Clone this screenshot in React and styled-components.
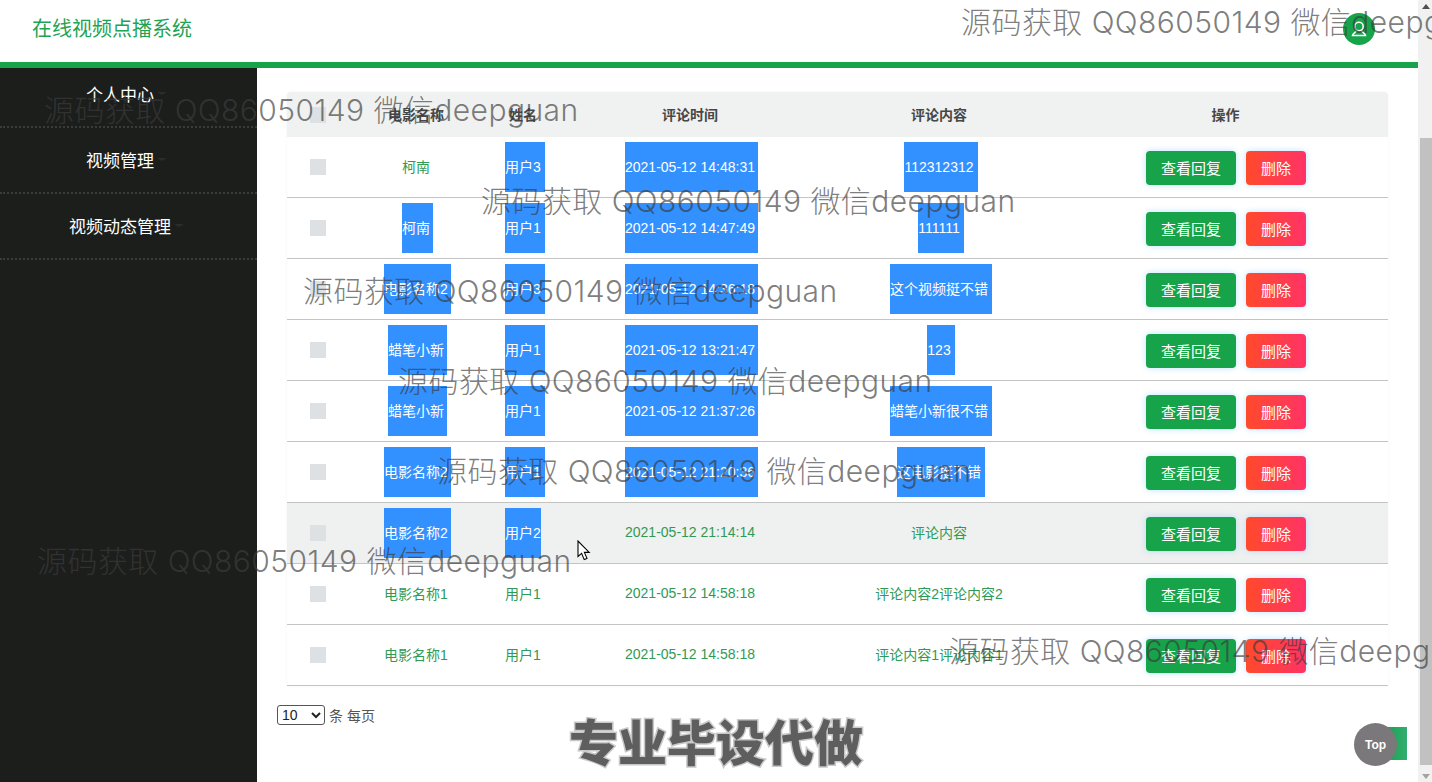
import React from "react";
import styled, { createGlobalStyle } from "styled-components";

const CJK = `"Liberation Sans", "Noto Sans CJK SC", sans-serif`;

const Global = createGlobalStyle`
  html, body { margin: 0; padding: 0; height: 100%; overflow: hidden; background: #fff; }
  body { font-family: ${CJK}; }
  * { box-sizing: border-box; }
`;

const Page = styled.div`
  position: relative;
  display: flex;
  width: 1432px;
  height: 782px;
  overflow: hidden;
  background: #fff;
`;
const Main = styled.div`
  display: flex;
  flex-direction: column;
  width: 1418px;
  height: 782px;
`;
const Header = styled.header`
  flex: none;
  display: flex;
  align-items: center;
  justify-content: space-between;
  height: 68px;
  padding: 0 43px 4px 32px;
  background: #fff;
  border-bottom: 6px solid #16a34a;
`;
const Title = styled.div`
  font-size: 20px;
  line-height: 28px;
  color: #1fa354;
`;
const Avatar = styled.div`
  display: flex;
  align-items: center;
  justify-content: center;
  width: 32px;
  height: 32px;
  border-radius: 50%;
  background: #16a34a;
`;
const Body = styled.div`
  flex: 1;
  display: flex;
  min-height: 0;
`;
const Sidebar = styled.nav`
  flex: none;
  width: 257px;
  background: #1c1e1c;
  overflow: hidden;
`;
const MenuList = styled.div`
  margin-top: -6px;
`;
const MenuItem = styled.div`
  display: flex;
  align-items: center;
  justify-content: center;
  gap: 3px;
  height: 66px;
  padding: 0 18px 2px 0;
  color: #fff;
  font-size: 17px;
  border-bottom: 2px dotted #3a3c3a;
`;
const Caret = styled.span`
  width: 0;
  height: 0;
  margin-right: -14px;
  border-left: 5px solid transparent;
  border-right: 5px solid transparent;
  border-top: 3px solid #2b2d2b;
`;
const Content = styled.main`
  flex: 1;
  min-width: 0;
  padding: 24px 30px 0;
`;
const Table = styled.table`
  width: 1101px;
  table-layout: fixed;
  border-collapse: separate;
  border-spacing: 0;
  font-size: 14px;
  box-shadow: 0 0 2px rgba(0, 0, 0, 0.06);
`;
const Th = styled.th`
  height: 45px;
  padding: 0 0 2px;
  background: #f0f1f1;
  color: #474747;
  font-size: 14px;
  font-weight: 700;
  text-align: center;
  &:first-child { border-top-left-radius: 4px; }
  &:last-child { border-top-right-radius: 4px; padding-left: 2px; }
`;
const Tr = styled.tr`
  background: ${(p) => (p.$hover ? "#eff0f0" : "#fff")};
`;
const Td = styled.td`
  height: 61px;
  padding: 0 0 2px;
  color: #2f9a55;
  text-align: center;
  border-bottom: 1px solid #c4c4c4;
`;
const Check = styled.span`
  display: block;
  width: 16px;
  height: 16px;
  margin: 2px auto 0 23px;
  background: #dde1e4;
`;
const Selected = styled.span`
  display: inline-block;
  vertical-align: middle;
  height: 50px;
  line-height: 50px;
  padding-right: ${(p) => p.$trail}px;
  margin-right: ${(p) => -p.$trail}px;
  margin-top: 2px;
  background: #3390ff;
  color: #fff;
  white-space: nowrap;
`;
const Actions = styled.div`
  display: flex;
  justify-content: center;
  gap: 10px;
  padding: 4px 0 0 3px;
`;
const Button = styled.button`
  width: ${(p) => (p.$danger ? 60 : 90)}px;
  height: 34px;
  padding: 0 0 2px;
  border: 0;
  border-radius: 4px;
  color: #fff;
  font-family: ${CJK};
  font-size: 15px;
  background: ${(p) =>
    p.$danger ? "linear-gradient(90deg, #ff4a2b, #ff3366)" : "#16a34a"};
  box-shadow: 0 0 6px rgba(110, 190, 255, 0.45);
`;
const Pager = styled.div`
  display: flex;
  align-items: center;
  gap: 4px;
  margin: 19px 0 0 -10px;
  color: #555;
  font-size: 14px;
`;
const PageSelect = styled.select`
  width: 48px;
  height: 20px;
  padding: 0;
  background: #fff;
  font-family: ${CJK};
  font-size: 14px;
  color: #222;
  border: 1px solid #555;
  border-radius: 3px;
`;
const Scrollbar = styled.div`
  flex: none;
  display: flex;
  flex-direction: column;
  align-items: flex-end;
  width: 14px;
  height: 782px;
  background: #f1f1f1;
`;
const ScrollArrow = styled.div`
  flex: none;
  display: flex;
  align-items: center;
  justify-content: center;
  width: 12px;
  height: 12px;
`;
const ScrollTrack = styled.div`
  flex: 1;
  width: 12px;
  padding: 126px 0 5px;
`;
const ScrollThumb = styled.div`
  height: 100%;
  background: #c1c1c1;
`;
const Watermark = styled.div`
  position: absolute;
  left: ${(p) => p.$x}px;
  top: ${(p) => p.$y}px;
  font-family: "Inter", "Noto Sans CJK SC", sans-serif;
  font-size: 30px;
  font-weight: 300;
  letter-spacing: 0.44px;
  line-height: 40px;
  white-space: nowrap;
  color: rgba(60, 60, 60, 0.68);
  pointer-events: none;
`;
const Banner = styled.div`
  position: absolute;
  left: 569px;
  top: 705px;
  font-family: "Noto Sans CJK SC", sans-serif;
  font-size: 49px;
  font-weight: 900;
  line-height: 70px;
  white-space: nowrap;
  color: #5e5e5e;
  -webkit-text-stroke: 3px #c9c9c9;
  paint-order: stroke fill;
`;
const TopSquare = styled.div`
  position: absolute;
  left: 1385px;
  top: 727px;
  width: 22px;
  height: 33px;
  background: linear-gradient(90deg, #16a34a, #34ad72);
`;
const TopButton = styled.div`
  position: absolute;
  left: 1354px;
  top: 723px;
  display: flex;
  align-items: center;
  justify-content: center;
  width: 43px;
  height: 43px;
  border-radius: 50%;
  background: #7a787a;
  color: #fff;
  font-size: 12px;
  font-weight: 700;
`;
const Pointer = styled.svg`
  position: absolute;
  left: 577px;
  top: 540px;
`;

const rows = [
  { name: "柯南", user: "用户3", time: "2021-05-12 14:48:31", text: "112312312", sel: "utc" },
  { name: "柯南", user: "用户1", time: "2021-05-12 14:47:49", text: "111111", sel: "nutc" },
  { name: "电影名称2", user: "用户3", time: "2021-05-12 14:36:18", text: "这个视频挺不错", sel: "nutc" },
  { name: "蜡笔小新", user: "用户1", time: "2021-05-12 13:21:47", text: "123", sel: "nutc" },
  { name: "蜡笔小新", user: "用户1", time: "2021-05-12 21:37:26", text: "蜡笔小新很不错", sel: "nutc" },
  { name: "电影名称2", user: "用户1", time: "2021-05-12 21:20:36", text: "这电影挺不错", sel: "nutc" },
  { name: "电影名称2", user: "用户2", time: "2021-05-12 21:14:14", text: "评论内容", sel: "nU", hover: true },
  { name: "电影名称1", user: "用户1", time: "2021-05-12 14:58:18", text: "评论内容2评论内容2", sel: "" },
  { name: "电影名称1", user: "用户1", time: "2021-05-12 14:58:18", text: "评论内容1评论内容1", sel: "" },
];

const marks = [
  [961, 2], [44, 90], [481, 181], [303, 271], [398, 361], [437, 451], [37, 541], [949, 631],
];

const widths = [62, 134, 80, 254, 244, 327];

const Cell = ({ on, trail = 3, children }) => (
  <Td>{on ? <Selected $trail={trail}>{children}</Selected> : children}</Td>
);

export default function App() {
  return (
    <Page>
      <Global />
      <Main>
        <Header>
          <Title>在线视频点播系统</Title>
          <Avatar>
            <svg width="20" height="20" viewBox="0 0 20 20" fill="none" stroke="#fff" strokeWidth="1.5">
              <circle cx="10" cy="7.5" r="4.2" />
              <path d="M7.5 11.5 C7 13.5 4 14 3.5 16.5 H16.5 C16 14 13 13.5 12.5 11.5" />
            </svg>
          </Avatar>
        </Header>
        <Body>
          <Sidebar>
            <MenuList>
              {["个人中心", "视频管理", "视频动态管理"].map((m) => (
                <MenuItem key={m}>
                  {m}
                  <Caret />
                </MenuItem>
              ))}
            </MenuList>
          </Sidebar>
          <Content>
            <Table>
              <colgroup>
                {widths.map((w, i) => (
                  <col key={i} width={w} />
                ))}
              </colgroup>
              <thead>
                <tr>
                  <Th><Check /></Th>
                  <Th>电影名称</Th>
                  <Th>姓名</Th>
                  <Th>评论时间</Th>
                  <Th>评论内容</Th>
                  <Th>操作</Th>
                </tr>
              </thead>
              <tbody>
                {rows.map((r, i) => (
                  <Tr key={i} $hover={r.hover}>
                    <Td><Check /></Td>
                    <Cell on={r.sel.includes("n")}>{r.name}</Cell>
                    <Cell on={/u/i.test(r.sel)} trail={r.sel.includes("U") ? 0 : 4}>{r.user}</Cell>
                    <Cell on={r.sel.includes("t")}>{r.time}</Cell>
                    <Cell on={r.sel.includes("c")} trail={4}>{r.text}</Cell>
                    <Td>
                      <Actions>
                        <Button>查看回复</Button>
                        <Button $danger>删除</Button>
                      </Actions>
                    </Td>
                  </Tr>
                ))}
              </tbody>
            </Table>
            <Pager>
              <PageSelect defaultValue="10">
                <option value="10">10</option>
                <option value="20">20</option>
              </PageSelect>
              <span>条 每页</span>
            </Pager>
          </Content>
        </Body>
      </Main>
      <Scrollbar>
        <ScrollArrow>
          <svg width="8" height="5" viewBox="0 0 8 5"><path d="M4 0 L8 5 H0 Z" fill="#505050" /></svg>
        </ScrollArrow>
        <ScrollTrack>
          <ScrollThumb />
        </ScrollTrack>
        <ScrollArrow>
          <svg width="8" height="5" viewBox="0 0 8 5"><path d="M0 0 H8 L4 5 Z" fill="#a3a3a3" /></svg>
        </ScrollArrow>
      </Scrollbar>
      {marks.map(([x, y]) => (
        <Watermark key={y} $x={x} $y={y}>源码获取 QQ86050149 微信deepguan</Watermark>
      ))}
      <Banner>专业毕设代做</Banner>
      <TopSquare />
      <TopButton>Top</TopButton>
      <Pointer width="14" height="21" viewBox="0 0 14 21">
        <path d="M1 1 V16.5 L4.6 13.4 L7.2 19.6 L10 18.4 L7.4 12.4 H12.2 Z" fill="#fff" stroke="#000" strokeWidth="1.1" />
      </Pointer>
    </Page>
  );
}
